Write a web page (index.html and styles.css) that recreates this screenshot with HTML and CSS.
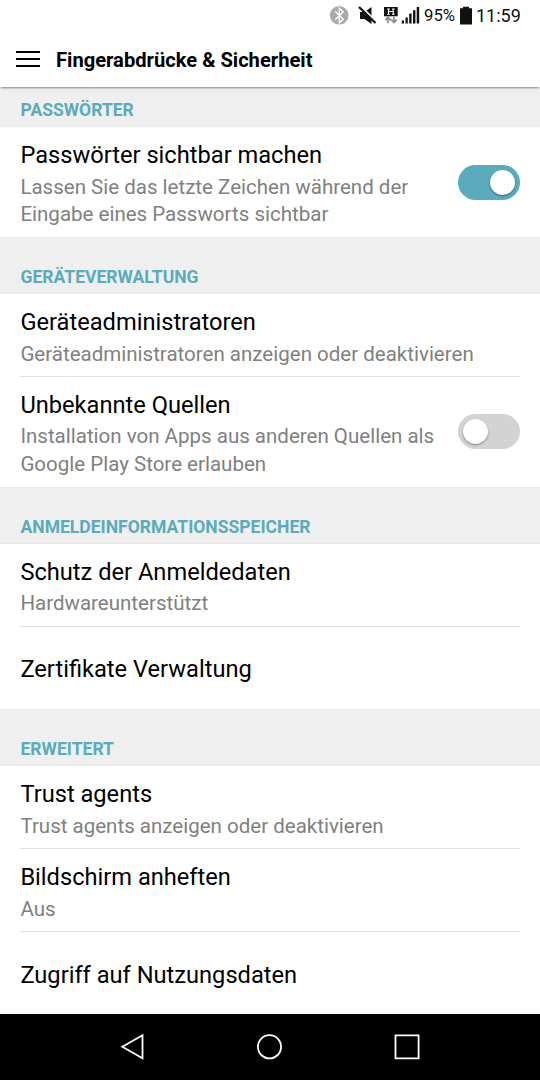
FILE: index.html
```html
<!DOCTYPE html>
<html lang="de">
<head>
<meta charset="utf-8">
<title>Fingerabdrücke &amp; Sicherheit</title>
<link rel="stylesheet" href="styles.css">
</head>
<body>
<div class="screen">
  <div class="status">
    <svg class="status-icons" width="92" height="32" viewBox="0 0 92 32">
      <circle cx="11.200" cy="15.300" r="9.300" fill="#aaa"/>
      <path d="M7.200 11.300l8 8-3.800 3.400V8.300l3.800 3.400-8 8" fill="none" stroke="#fff" stroke-width="1.400"/>
      <path d="M32 12h4.500l7-5v17l-7-5H32z" fill="#111"/>
      <path d="M32.500 6l16 16" stroke="#fff" stroke-width="2"/>
      <path d="M31 7l16.500 16" stroke="#111" stroke-width="2.200"/>
      <path d="M56 7h13.700v9.300H56z" fill="#111"/>
      <path d="M60.500 8.800v5.500M65.300 8.800v5.500M60.500 11.500h4.800M59.200 9h2.600M59.200 14.200h2.600M64 9h2.600M64 14.200h2.600" stroke="#fff" stroke-width="1.100"/>
      <path d="M60 23.300v-5.500M57.200 20.200l2.800-2.900 2.800 2.900M66 17v5.300M63.200 19.600l2.800 2.900 2.800-2.900" stroke="#8c8c8c" stroke-width="1.700" fill="none"/>
      <path d="M73.800 20.500h2.200v3h-2.200zM77.500 17.500h2.300v6h-2.300zM81.200 13.500h2.400v10h-2.400zM85 10.300h2.400v13.200H85zM88.700 7h2.500v16.500h-2.500z" fill="#111"/>
    </svg>
    <span class="percent">95%</span>
    <svg class="battery" width="12" height="32" viewBox="0 0 12 32"><path d="M3 6.800h6v1.500h3V24.500H0V8.300h3z" fill="#111"/></svg>
    <span class="clock">11:59</span>
  </div>
  <header class="header">
    <svg class="menu" width="24" height="18" viewBox="0 0 24 18"><path d="M0 2h24M0 9h24M0 16h24" stroke="#000" stroke-width="2.200"/></svg>
    <h1 class="heading">Fingerabdrücke &amp; Sicherheit</h1>
  </header>
  <main class="list">
    <h2 class="section section-first">PASSWÖRTER</h2>
    <div class="row row-tall">
      <div class="copy"><div class="title">Passwörter sichtbar machen</div>
      <div class="sub">Lassen Sie das letzte Zeichen während der<br>Eingabe eines Passworts sichtbar</div></div>
      <div class="switch switch-on"><div class="knob"></div></div>
    </div>
    <h2 class="section">GERÄTEVERWALTUNG</h2>
    <div class="row divided">
      <div class="copy"><div class="title">Geräteadministratoren</div>
      <div class="sub">Geräteadministratoren anzeigen oder deaktivieren</div></div>
    </div>
    <div class="row row-tall">
      <div class="copy"><div class="title">Unbekannte Quellen</div>
      <div class="sub">Installation von Apps aus anderen Quellen als<br>Google Play Store erlauben</div></div>
      <div class="switch"><div class="knob"></div></div>
    </div>
    <h2 class="section">ANMELDEINFORMATIONSSPEICHER</h2>
    <div class="row divided">
      <div class="copy"><div class="title">Schutz der Anmeldedaten</div>
      <div class="sub">Hardwareunterstützt</div></div>
    </div>
    <div class="row row-single"><div class="title">Zertifikate Verwaltung</div></div>
    <h2 class="section">ERWEITERT</h2>
    <div class="row divided">
      <div class="copy"><div class="title">Trust agents</div>
      <div class="sub">Trust agents anzeigen oder deaktivieren</div></div>
    </div>
    <div class="row divided">
      <div class="copy"><div class="title">Bildschirm anheften</div>
      <div class="sub">Aus</div></div>
    </div>
    <div class="row row-single"><div class="title">Zugriff auf Nutzungsdaten</div></div>
  </main>
  <nav class="nav">
    <svg width="26" height="28" viewBox="0 0 26 28"><path d="M2.300 13.800L22.500 2.300v23z" fill="none" stroke="#fff" stroke-width="1.800"/></svg>
    <svg width="26" height="28" viewBox="0 0 26 28"><circle cx="12.500" cy="13.800" r="11.600" fill="none" stroke="#fff" stroke-width="1.800"/></svg>
    <svg width="26" height="28" viewBox="0 0 26 28"><path d="M1.500 2.300h23.100v23.100H1.500z" fill="none" stroke="#fff" stroke-width="1.800"/></svg>
  </nav>
</div>
</body>
</html>
```
FILE: styles.css
```css
* { box-sizing: border-box; }
body { margin: 0; background: #fff; font-family: Roboto, sans-serif; color: #000; }
.screen { width: 540px; height: 1080px; display: flex; flex-direction: column; overflow: hidden; }
.status { height: 32px; display: flex; padding-left: 328px; line-height: 32px; white-space: nowrap; color: #111; flex: none; }
.status-icons { flex: none; }
.percent { width: 40px; padding-left: 4px; font-size: 16.700px; flex: none; }
.battery { flex: none; }
.clock { padding-left: 4px; font-size: 18px; }
.header { height: 55px; display: flex; align-items: center; padding-left: 16px; flex: none; position: relative; z-index: 1; background: #fff; box-shadow: 0 2px 2px -1px rgba(0,0,0,.45); }
.menu { margin-top: -1px; }
.heading { margin: 1px 0 0 16px; font-size: 20.150px; line-height: 28px; font-weight: 700; white-space: nowrap; }
.list { flex: none; height: 927px; overflow: hidden; }
.section { margin: 0; height: 57px; padding: 27px 20px 0 20.500px; background: #efefef; color: #5aabbc; font-size: 17.550px; line-height: 24px; font-weight: 700; border-top: 1px solid #e9e9e9; border-bottom: 1px solid #e9e9e9; }
.section-first { height: 40px; padding-top: 11px; border-top: 0; }
.row { height: 82.750px; margin: 0 20px; padding-top: 12px; display: flex; justify-content: space-between; white-space: nowrap; }
.row-tall { height: 110px; }
.divided { border-bottom: 1.500px solid #e2e2e2; }
.row-single { padding: 3px 0 0; align-items: center; }
.title { padding-left: .4px; font-size: 23.650px; line-height: 32px; }
.sub { margin-top: 2.500px; padding-left: .4px; font-size: 20.530px; line-height: 27.500px; color: #808080; }
.switch { flex: none; align-self: center; margin-top: -12px; width: 62px; height: 35px; border-radius: 18px; padding: 5px; background: #d3d3d3; display: flex; }
.switch-on { background: #5aabbc; justify-content: flex-end; }
.knob { width: 25px; height: 25px; border-radius: 50%; background: #fff; box-shadow: 0 1px 2px rgba(0,0,0,.4); }
.nav { height: 66px; flex: none; background: #000; display: flex; align-items: center; justify-content: space-between; padding: 0 120px; }
```
